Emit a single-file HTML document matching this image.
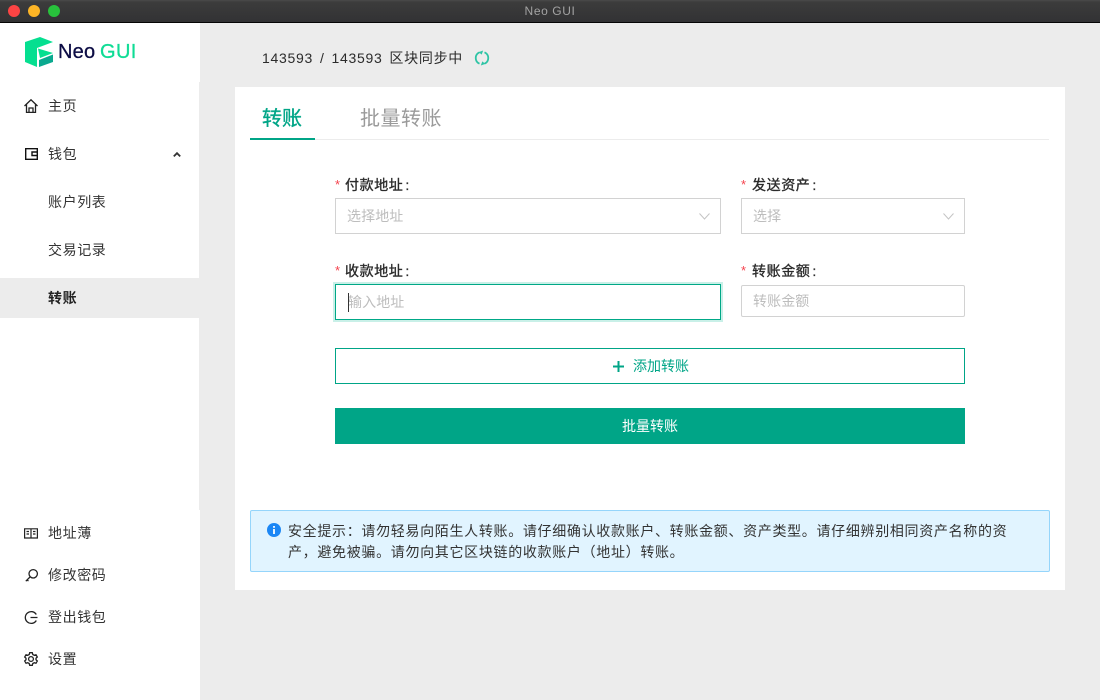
<!DOCTYPE html>
<html lang="zh">
<head>
<meta charset="utf-8">
<title>Neo GUI</title>
<style>
html,body{margin:0;padding:0;width:1100px;height:700px;overflow:hidden;background:#ececec}
body{position:relative;font-family:"Liberation Sans","Noto Sans CJK SC",sans-serif;font-size:14px;color:#2b2b2b}
.a{position:absolute;white-space:nowrap}
.t{line-height:20px;height:20px}
.nav{left:48px;font-size:14px;letter-spacing:.6px;color:#333}
.lbl{font-size:14px;letter-spacing:.6px;word-spacing:-2.5px;color:#2b2b2b;-webkit-text-stroke:.35px #2b2b2b}
.star{color:#f5424d;font-size:13px;font-weight:400}
.box{box-sizing:border-box;background:#fff;border:1px solid #d2d2d2}
.ph{color:#bdbdbd;font-size:14px;letter-spacing:.1px}
svg{position:absolute;overflow:visible}
</style>
</head>
<body>
<!-- title bar -->
<div class="a" style="left:0;top:0;width:1100px;height:22px;background:linear-gradient(#4a4a4a 0,#3c3c3c 2px,#323234 100%);border-bottom:1px solid #050505;box-sizing:content-box"></div>
<div class="a" style="left:8px;top:5px;width:12px;height:12px;border-radius:50%;background:#fc4444"></div>
<div class="a" style="left:28px;top:5px;width:12px;height:12px;border-radius:50%;background:#fdb526"></div>
<div class="a" style="left:48px;top:5px;width:12px;height:12px;border-radius:50%;background:#28c23c"></div>
<div class="a" style="left:0;top:3px;width:1100px;text-align:center;color:#a3a3a3;font-size:12px;line-height:16px;letter-spacing:.6px">Neo GUI</div>

<!-- sidebar -->
<div class="a" style="left:0;top:23px;width:200px;height:59px;background:#fff"></div>
<div class="a" style="left:0;top:82px;width:199px;height:428px;background:#fff"></div>
<div class="a" style="left:0;top:510px;width:200px;height:190px;background:#fff"></div>

<!-- logo -->
<svg style="left:25px;top:37px" width="28" height="30" viewBox="0 0 28 30">
<path d="M0 5 15 0 28 5 12 11V30L0 25Z" fill="#05df90"/>
<path d="M13 11.500 28 16 15 21Z" fill="#05df90"/>
<path d="M14 23 28 17.500V25L14 30Z" fill="#0aa98f"/>
</svg>
<div class="a" style="left:58px;top:38px;font-size:20px;line-height:28px;color:#0d0d45;letter-spacing:.2px;-webkit-text-stroke:.3px #0d0d45">Neo</div>
<div class="a" style="left:100px;top:38px;font-size:20px;line-height:28px;color:#0fdc95;letter-spacing:.4px;-webkit-text-stroke:.3px #0fdc95">GUI</div>

<!-- nav -->
<svg style="left:24px;top:99px" width="14" height="14" viewBox="0 0 14 14" fill="none" stroke="#222" stroke-width="1.300"><path d="M.5 7 7 .8 13.500 7M2.500 5.500V13.400H11.500V5.500M5 13.400V9H9V13.400"/></svg>
<div class="a t nav" style="top:96px">主页</div>

<svg style="left:25px;top:148px" width="13" height="12" viewBox="0 0 13 12" fill="none" stroke="#111" stroke-width="1.400"><path d="M.7.7H12.300V11.300H.7ZM12 4H7V7.500H12"/></svg>
<div class="a t nav" style="top:144px">钱包</div>
<svg style="left:173px;top:152px" width="8" height="5" viewBox="0 0 8 5" fill="none" stroke="#333" stroke-width="1.800"><path d="M.8 4.400 4 1.200 7.200 4.400"/></svg>

<div class="a t nav" style="top:192px">账户列表</div>
<div class="a t nav" style="top:240px">交易记录</div>
<div class="a" style="left:0;top:278px;width:199px;height:40px;background:#ececec"></div>
<div class="a t nav" style="top:288px;font-weight:700;color:#222">转账</div>

<svg style="left:24px;top:528px" width="14" height="11" viewBox="0 0 14 11" fill="none" stroke="#222" stroke-width="1.200"><path d="M.6.8H13.400V10H.6ZM7 .8V10M2.500 3.500H5M2.500 6H5M9 3.500H11.500M9 6H11.500"/></svg>
<div class="a t nav" style="top:523px">地址薄</div>
<svg style="left:25px;top:569px" width="13" height="13" viewBox="0 0 13 13" fill="none" stroke="#222" stroke-width="1.300"><circle cx="8.200" cy="4.800" r="4.200"/><path d="M5 8 .8 12.200M2 11 3.500 12"/></svg>
<div class="a t nav" style="top:565px">修改密码</div>
<svg style="left:24px;top:611px" width="14" height="13" viewBox="0 0 14 13" fill="none" stroke="#222" stroke-width="1.300"><path d="M12.300 3.500A5.900 5.900 0 1 0 12.300 9.500M6.500 6.500H13.500"/></svg>
<div class="a t nav" style="top:607px">登出钱包</div>
<svg style="left:24px;top:652px" width="14" height="14" viewBox="0 0 14 14" fill="none" stroke="#222" stroke-width="1.300"><path d="M5.700.7H8.300L8.800 2.500 10.300 3.300 12 2.800 13.300 5 12 6.300V7.700L13.300 9 12 11.200 10.300 10.700 8.800 11.500 8.300 13.300H5.700L5.200 11.500 3.700 10.700 2 11.200.7 9 2 7.700V6.300L.7 5 2 2.800 3.700 3.300 5.200 2.500Z"/><circle cx="7" cy="7" r="2.400"/></svg>
<div class="a t nav" style="top:649px">设置</div>

<!-- sync status -->
<div class="a t" style="left:262px;top:48px;font-size:14px;letter-spacing:.72px;word-spacing:2.300px;color:#2b2b2b">143593 / 143593 区块同步中</div>
<svg style="left:475px;top:51px" width="14" height="14" viewBox="0 0 14 14" fill="none" stroke="#2ec4a5" stroke-width="1.800"><path d="M9.500 1.300A6.200 6.200 0 0 1 9.500 12.700M4.500 12.700A6.200 6.200 0 0 1 4.500 1.300"/><path d="M4.500 1.300 7.500 .2 6.500 3ZM9.500 12.700 6.500 13.800 7.500 11Z" stroke-width=".8" fill="#2ec4a5"/></svg>

<!-- card -->
<div class="a" style="left:235px;top:87px;width:830px;height:503px;background:#fff"></div>
<div class="a" style="left:250px;top:139px;width:799px;height:1px;background:#ececec"></div>
<div class="a" style="left:250px;top:138px;width:65px;height:2px;background:#00a587"></div>
<div class="a" style="left:262px;top:105px;font-size:20px;line-height:28px;color:#00a587;-webkit-text-stroke:.35px #00a587">转账</div>
<div class="a" style="left:360px;top:105px;font-size:20px;line-height:28px;color:#9a9a9a;letter-spacing:.5px">批量转账</div>

<!-- form -->
<div class="a star" style="left:335px;top:177px;line-height:16px">*</div>
<div class="a t lbl" style="left:345px;top:175px">付款地址 :</div>
<div class="a box" style="left:335px;top:198px;width:386px;height:36px"></div>
<div class="a t ph" style="left:347px;top:206px">选择地址</div>
<svg style="left:699px;top:213px" width="11" height="7" viewBox="0 0 11 7" fill="none" stroke="#c4c4c4" stroke-width="1"><path d="M.5.5 5.500 6 10.500.5"/></svg>

<div class="a star" style="left:741px;top:177px;line-height:16px">*</div>
<div class="a t lbl" style="left:752px;top:175px">发送资产 :</div>
<div class="a box" style="left:741px;top:198px;width:224px;height:36px"></div>
<div class="a t ph" style="left:753px;top:206px">选择</div>
<svg style="left:943px;top:213px" width="11" height="7" viewBox="0 0 11 7" fill="none" stroke="#c4c4c4" stroke-width="1"><path d="M.5.5 5.500 6 10.500.5"/></svg>

<div class="a star" style="left:335px;top:263px;line-height:16px">*</div>
<div class="a t lbl" style="left:345px;top:261px">收款地址 :</div>
<div class="a box" style="left:335px;top:284px;width:386px;height:36px;border-color:#00a887;box-shadow:0 0 0 2px #c9f0e8"></div>
<div class="a t ph" style="left:348px;top:292px">输入地址</div>
<div class="a" style="left:348px;top:293px;width:1px;height:19px;background:#333"></div>

<div class="a star" style="left:741px;top:263px;line-height:16px">*</div>
<div class="a t lbl" style="left:752px;top:261px">转账金额 :</div>
<div class="a box" style="left:741px;top:285px;width:224px;height:32px;border-radius:2px"></div>
<div class="a t ph" style="left:753px;top:291px">转账金额</div>

<!-- buttons -->
<div class="a box" style="left:335px;top:348px;width:630px;height:36px;border-color:#00a587"></div>
<svg style="left:612.500px;top:360.500px" width="11" height="11" viewBox="0 0 11 11" fill="none" stroke="#00a587" stroke-width="2"><path d="M5.500 0V11M0 5.500H11"/></svg>
<div class="a t" style="left:633px;top:356px;font-size:14px;color:#00a587">添加转账</div>
<div class="a" style="left:335px;top:408px;width:630px;height:36px;background:#00a587"></div>
<div class="a t" style="left:622px;top:416px;font-size:14px;color:#fff">批量转账</div>

<!-- alert -->
<div class="a" style="left:250px;top:510px;width:800px;height:62px;box-sizing:border-box;background:#e1f4ff;border:1px solid #95d5fb;border-radius:2px"></div>
<svg style="left:267px;top:523px" width="14" height="14" viewBox="0 0 14 14"><circle cx="7" cy="7" r="7" fill="#1b87f5"/><rect x="6.100" y="6" width="1.800" height="5" fill="#fff"/><rect x="6.100" y="3" width="1.800" height="1.800" fill="#fff"/></svg>
<div class="a" style="left:288px;top:519px;font-size:14px;line-height:24px;letter-spacing:.68px;color:#333">安全提示：请勿轻易向陌生人转账。请仔细确认收款账户、转账金额、资产类型。请仔细辨别相同资产名称的资</div>
<div class="a" style="left:288px;top:540px;font-size:14px;line-height:24px;letter-spacing:.68px;color:#333">产，避免被骗。请勿向其它区块链的收款账户（地址）转账。</div>
</body>
</html>
